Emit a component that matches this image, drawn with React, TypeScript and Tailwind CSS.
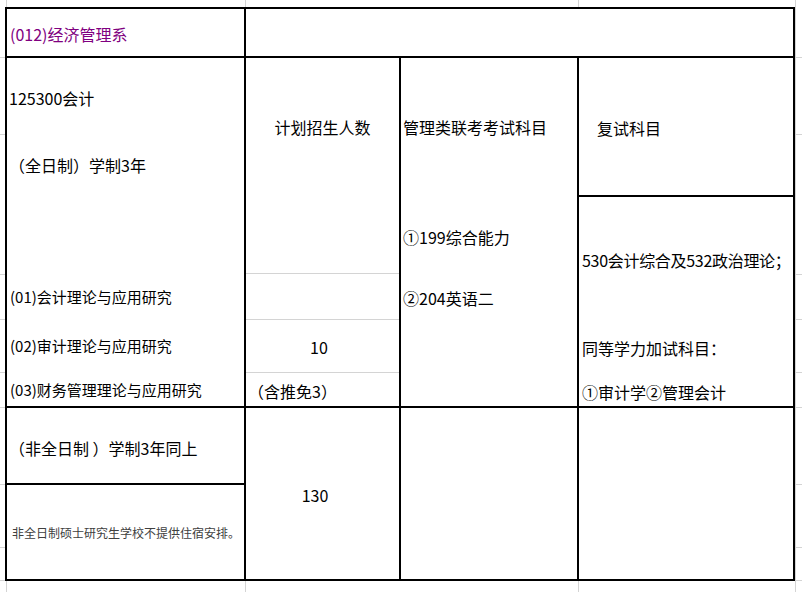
export default function App() {
  const hLines = [57, 134, 274, 319, 372, 407, 484, 547, 580]
  const vLines = [6, 245, 578, 795]

  return (
    <div className="relative w-[802px] h-[592px] overflow-hidden bg-white text-black whitespace-nowrap font-['Noto_Sans_CJK_SC','Noto_Sans',sans-serif]">
      {/* spreadsheet gridlines behind the table */}
      <svg className="absolute top-0 left-0" width="802" height="592">
        {hLines.map((y) => (
          <line key={'h' + y} x1="0" x2="802" y1={y + 0.5} y2={y + 0.5} stroke="#d4d4d4" strokeWidth="1" />
        ))}
        {vLines.map((x) => (
          <line key={'v' + x} y1="0" y2="592" x1={x + 0.5} x2={x + 0.5} stroke="#d4d4d4" strokeWidth="1" />
        ))}
      </svg>

      <div className="relative ml-[5px] mt-[7px] w-fit grid grid-cols-[237px_153px_176px_214px] grid-rows-[47px_137px_209px_75px_94px] gap-[2px] border-2 border-black bg-black">
        {/* header row */}
        <div className="col-start-1 row-start-1 bg-white flex items-center pl-[3px] pt-[2px] text-[16px] text-[#800080]">
          (012)经济管理系
        </div>
        <div className="col-start-2 col-span-3 row-start-1 bg-white" />

        {/* full-time block */}
        <div className="col-start-1 row-start-2 row-span-2 bg-white flex flex-col">
          <div className="h-[76px] flex items-center pl-[2px] pt-[3px] text-[16px]">125300会计</div>
          <div className="h-[62px] flex items-center pl-[2px] text-[16px]">（全日制）学制3年</div>
          <div className="h-[77px]" />
          <div className="h-[46px] flex items-center pl-[3px] pt-[3px] text-[15px]">(01)会计理论与应用研究</div>
          <div className="h-[53px] flex items-center pl-[3px] pt-[2px] text-[15px]">(02)审计理论与应用研究</div>
          <div className="h-[34px] flex items-center pl-[3px] pt-[3px] text-[15px]">(03)财务管理理论与应用研究</div>
        </div>

        <div className="col-start-2 row-start-2 row-span-2 bg-white flex flex-col text-[16px]">
          <div className="h-[137px] flex items-center justify-center pt-[1px]">计划招生人数</div>
          <div className="h-[79px] border-b border-[#d4d4d4]" />
          <div className="h-[46px] border-b border-[#d4d4d4]" />
          <div className="h-[53px] border-b border-[#d4d4d4] flex items-center justify-center pt-[1px] pr-[7px]">10</div>
          <div className="flex-1 flex items-center pl-[2px] pt-[2px]">（含推免3）</div>
        </div>

        <div className="col-start-3 row-start-2 row-span-2 bg-white flex flex-col pl-[2px] text-[16px]">
          <div className="h-[137px] flex items-center pt-[1px]">管理类联考考试科目</div>
          <div className="h-[79px] flex items-center pt-[4px]">①199综合能力</div>
          <div className="h-[46px] flex items-center pt-[2px]">②204英语二</div>
        </div>

        <div className="col-start-4 row-start-2 bg-white flex items-center pl-[18px] pt-[2px] text-[16px]">复试科目</div>

        <div className="col-start-4 row-start-3 bg-white flex flex-col pl-[3px] text-[16px]">
          <div className="h-[122px] flex items-center pt-[3px] tracking-[-0.3px]">530会计综合及532政治理论；</div>
          <div className="h-[53px] flex items-center pt-[4px]">同等学力加试科目：</div>
          <div className="h-[34px] flex items-center pt-[5px]">①审计学②管理会计</div>
        </div>

        {/* part-time block */}
        <div className="col-start-1 row-start-4 bg-white flex items-center pl-[2px] pt-[4px] text-[16px]">
          （非全日制 ）学制3年同上
        </div>
        <div className="col-start-1 row-start-5 bg-white flex items-center pl-[5px] pt-[2px] text-[12px] text-[#404040]">
          非全日制硕士研究生学校不提供住宿安排。
        </div>
        <div className="col-start-2 row-start-4 row-span-2 bg-white flex items-center justify-center pt-[2px] pr-[15px] text-[16px]">
          130
        </div>
        <div className="col-start-3 row-start-4 row-span-2 bg-white" />
        <div className="col-start-4 row-start-4 row-span-2 bg-white" />
      </div>
    </div>
  )
}
